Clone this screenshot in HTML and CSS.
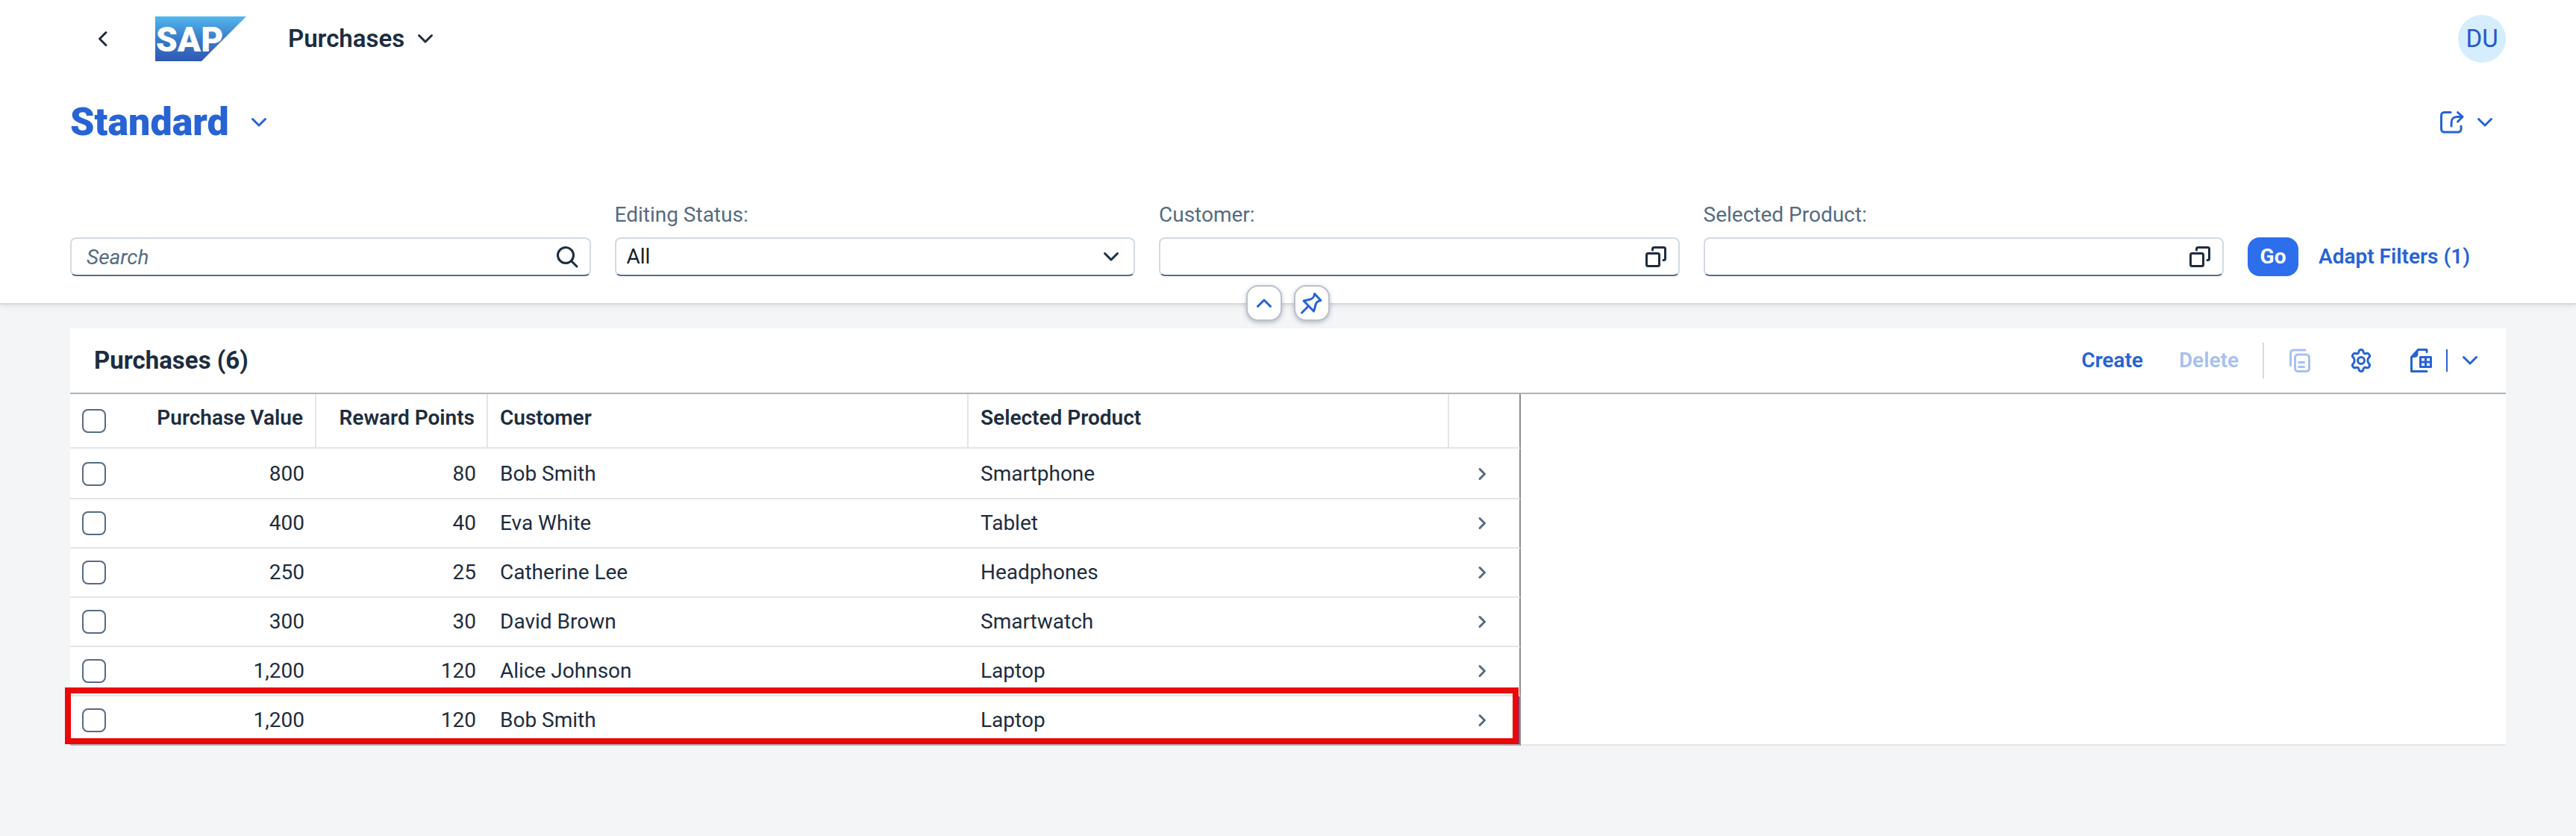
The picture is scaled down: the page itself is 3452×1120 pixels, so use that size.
FILE: index.html
```html
<!DOCTYPE html>
<html lang="en">
<head>
<meta charset="utf-8">
<meta name="viewport" content="width=device-width, initial-scale=1">
<title>Purchases</title>
<link rel="stylesheet" href="styles.css">
</head>
<body>
<svg class="sprite" aria-hidden="true">
  <symbol id="i-down" viewBox="0 0 32 32"><path d="M7.500 11.500 16 20l8.500-8.500"/></symbol>
  <symbol id="i-up" viewBox="0 0 32 32"><path d="M7.500 20.500 16 12l8.500 8.500"/></symbol>
  <symbol id="i-left" viewBox="0 0 32 32"><path d="M20 7.500 11.500 16l8.500 8.500"/></symbol>
  <symbol id="i-nav" viewBox="0 0 24 24"><path d="M9 5.500 15.500 12 9 18.500"/></symbol>
  <symbol id="i-search" viewBox="0 0 32 32"><circle cx="14" cy="14" r="10.500"/><path d="M22 22l7 7"/></symbol>
  <symbol id="i-help" viewBox="0 0 32 32"><rect x="3.500" y="11.500" width="17" height="17" rx="2"/><path d="M11.500 7V5.500a2 2 0 0 1 2-2h13a2 2 0 0 1 2 2v13a2 2 0 0 1-2 2H26"/></symbol>
  <symbol id="i-share" viewBox="0 0 32 32"><path d="M14 2.500H5.500a4 4 0 0 0-4 4V25a4 4 0 0 0 4 4H24a4 4 0 0 0 4-4v-4M15 21v-5c0-4.500 3-7.500 7.500-7.500H29M23.500 2.500l6.500 6-6.500 6.500"/></symbol>
  <symbol id="i-pin" viewBox="0 0 32 32"><path d="M19.500 3.500 28 12.500c-4 .5-7 3.500-7.500 8l-2 6.500L5 13l7-1.500c4-.5 7.500-3.500 7.500-8zM11.500 20 2.500 29"/></symbol>
  <symbol id="i-copy" viewBox="0 0 32 32"><path d="M3.500 22.500V6a4 4 0 0 1 4-4H23M14.500 18.500h7M14.500 24.500h7"/><rect x="9.500" y="8" width="19" height="22.500" rx="4"/></symbol>
  <symbol id="i-gear" viewBox="0 0 32 32"><path d="M16 1.500c1.800 0 2.700 1 3 2.700.4 2.200 1.600 3 3.800 2.300 1.700-.6 3.200-.4 4.200 1.400 1 1.700.6 3.200-.7 4.300-1.900 1.700-1.900 5.900 0 7.600 1.300 1.100 1.700 2.600.7 4.300-1 1.800-2.500 2-4.200 1.400-2.200-.7-3.400.1-3.800 2.300-.3 1.700-1.200 2.700-3 2.700s-2.700-1-3-2.700c-.4-2.200-1.600-3-3.800-2.300-1.700.6-3.200.4-4.200-1.400-1-1.700-.6-3.200.7-4.300 1.900-1.700 1.900-5.900 0-7.600C4.400 11.100 4 9.600 5 7.900c1-1.800 2.500-2 4.200-1.400 2.200.7 3.400-.1 3.800-2.300.3-1.700 1.200-2.700 3-2.700z"/><circle cx="16" cy="16" r="4.500"/></symbol>
  <symbol id="i-export" viewBox="0 0 32 32"><path d="M24 4.500V1.500H12.500l-9 10v19H24"/><path class="solid" d="M12 2v5.500c0 2.500-1.500 4-4 4H3z"/><path d="M15.500 11.500h14v13h-14zM22.500 11.500v13M15.500 18h14"/></symbol>
</svg>

<header class="top">
  <div class="shell">
    <button class="icon-btn back" aria-label="Back"><svg class="ic"><use href="#i-left"/></svg></button>
    <a class="logo" href="#" aria-label="Home">
      <svg viewBox="0 0 122 60" width="122" height="60">
        <defs><linearGradient id="lg" x1="0" y1="0" x2="0" y2="1"><stop offset="0" stop-color="#52b7ee"/><stop offset=".5" stop-color="#3a7cc9"/><stop offset="1" stop-color="#2f59b3"/></linearGradient></defs>
        <path d="M0 0h122L62 60H0z" fill="url(#lg)"/>
        <text x="1" y="47" class="logo-text">SAP</text>
      </svg>
    </a>
    <button class="app-title">Purchases <svg class="ic"><use href="#i-down"/></svg></button>
    <button class="avatar" aria-label="User DU">DU</button>
  </div>
  <div class="view-row">
    <h1>Standard</h1>
    <button class="icon-btn" aria-label="Select view"><svg class="ic"><use href="#i-down"/></svg></button>
    <button class="icon-btn share" aria-label="Share"><svg class="ic"><use href="#i-share"/></svg><svg class="ic"><use href="#i-down"/></svg></button>
  </div>
  <form class="filters">
    <div class="field">
      <div class="control"><input class="search" type="text" placeholder="Search" aria-label="Search"><svg class="ic"><use href="#i-search"/></svg></div>
    </div>
    <div class="field">
      <label for="status">Editing Status:</label>
      <div class="control"><select id="status"><option>All</option></select><svg class="ic"><use href="#i-down"/></svg></div>
    </div>
    <div class="field">
      <label for="customer">Customer:</label>
      <div class="control"><input id="customer" type="text"><svg class="ic"><use href="#i-help"/></svg></div>
    </div>
    <div class="field">
      <label for="product">Selected Product:</label>
      <div class="control"><input id="product" type="text"><svg class="ic"><use href="#i-help"/></svg></div>
    </div>
    <div class="actions">
      <button type="button" class="go">Go</button>
      <button type="button" class="text-btn">Adapt Filters (1)</button>
    </div>
  </form>
  <div class="toggles">
    <button aria-label="Collapse header"><svg class="ic"><use href="#i-up"/></svg></button>
    <button aria-label="Pin header"><svg class="ic"><use href="#i-pin"/></svg></button>
  </div>
</header>

<main class="panel">
  <div class="toolbar">
    <h2>Purchases (6)</h2>
    <button class="text-btn">Create</button>
    <button class="text-btn" disabled>Delete</button>
    <span class="sep"></span>
    <button class="icon-btn" disabled aria-label="Copy"><svg class="ic"><use href="#i-copy"/></svg></button>
    <button class="icon-btn" aria-label="Settings"><svg class="ic"><use href="#i-gear"/></svg></button>
    <button class="icon-btn" aria-label="Export"><svg class="ic"><use href="#i-export"/></svg></button>
    <span class="split"></span>
    <button class="icon-btn" aria-label="Export options"><svg class="ic"><use href="#i-down"/></svg></button>
  </div>
  <div class="grid">
    <div class="table-wrap">
      <table>
        <colgroup><col class="c-sel"><col class="c-value"><col class="c-points"><col><col><col class="c-nav"></colgroup>
        <thead>
          <tr><th><input type="checkbox" aria-label="Select all"></th><th class="num">Purchase Value</th><th class="num">Reward Points</th><th>Customer</th><th>Selected Product</th><th class="nav"></th></tr>
        </thead>
        <tbody>
          <tr><td><input type="checkbox" aria-label="Select row 1"></td><td class="num">800</td><td class="num">80</td><td>Bob Smith</td><td>Smartphone</td><td class="nav"><svg class="ic"><use href="#i-nav"/></svg></td></tr>
          <tr><td><input type="checkbox" aria-label="Select row 2"></td><td class="num">400</td><td class="num">40</td><td>Eva White</td><td>Tablet</td><td class="nav"><svg class="ic"><use href="#i-nav"/></svg></td></tr>
          <tr><td><input type="checkbox" aria-label="Select row 3"></td><td class="num">250</td><td class="num">25</td><td>Catherine Lee</td><td>Headphones</td><td class="nav"><svg class="ic"><use href="#i-nav"/></svg></td></tr>
          <tr><td><input type="checkbox" aria-label="Select row 4"></td><td class="num">300</td><td class="num">30</td><td>David Brown</td><td>Smartwatch</td><td class="nav"><svg class="ic"><use href="#i-nav"/></svg></td></tr>
          <tr><td><input type="checkbox" aria-label="Select row 5"></td><td class="num">1,200</td><td class="num">120</td><td>Alice Johnson</td><td>Laptop</td><td class="nav"><svg class="ic"><use href="#i-nav"/></svg></td></tr>
          <tr><td><input type="checkbox" aria-label="Select row 6"></td><td class="num">1,200</td><td class="num">120</td><td>Bob Smith</td><td>Laptop</td><td class="nav current"><svg class="ic"><use href="#i-nav"/></svg></td></tr>
        </tbody>
      </table>
      <div class="highlight"></div>
    </div>
    <div class="blank"></div>
  </div>
</main>
</body>
</html>
```
FILE: styles.css
```css
* { box-sizing: border-box; }
body {
  margin: 0;
  background: #f4f5f7;
  color: #1d2d3e;
  font-family: Roboto, "Liberation Sans", sans-serif;
  font-size: 28px;
  line-height: 36px;
}
button, input, select { font: inherit; color: inherit; }
button { background: none; border: 0; padding: 0; }
h1, h2 { margin: 0; }
.sprite { position: absolute; width: 0; height: 0; }
.ic {
  display: block;
  flex: none;
  width: 32px;
  height: 32px;
  fill: none;
  stroke: currentColor;
  stroke-width: 3;
  stroke-linecap: round;
  stroke-linejoin: round;
}
.solid { fill: currentColor; stroke-width: 1; }

.top {
  position: relative;
  background: #fff;
  border-bottom: 2px solid #d9d9d9;
  box-shadow: 0 2px 6px rgba(34, 53, 72, .1);
  padding-bottom: 36px;
}
.shell {
  display: flex;
  align-items: center;
  height: 104px;
  padding: 0 94px 0 122px;
}
.back { margin-right: 54px; }
.logo, .logo svg { display: block; }
.logo-text { font: 900 46px Roboto, sans-serif; fill: #fff; }
.app-title {
  display: flex;
  align-items: center;
  gap: 12px;
  margin-left: 56px;
  font-size: 33px;
  font-weight: 600;
}
.avatar {
  width: 64px;
  height: 64px;
  margin-left: auto;
  border-radius: 50%;
  background: #d5edfc;
  color: #2557cf;
  font-size: 33px;
}
.view-row {
  display: flex;
  align-items: center;
  height: 120px;
  padding: 0 106px 0 94px;
  color: #2763d4;
}
.view-row h1 {
  margin-right: 24px;
  font-size: 52px;
  line-height: 56px;
  font-weight: 900;
}
.share { display: flex; gap: 12px; margin-left: auto; }
.filters {
  display: grid;
  grid-template-columns: repeat(4, 1fr) auto;
  column-gap: 32px;
  align-items: end;
  padding: 46px 94px 0;
}
.field label { display: block; margin-bottom: 12px; color: #556b82; }
.control { display: grid; align-items: center; }
.control > * { grid-area: 1 / 1; }
.control .ic { justify-self: end; margin-right: 16px; color: #1d2d3e; pointer-events: none; }
.control input, .control select {
  width: 100%;
  height: 52px;
  padding: 0 14px;
  border: 2px solid #d3dae1;
  border-bottom-color: #556b82;
  border-radius: 8px;
  background: #fff;
  color: #131e29;
  appearance: none;
}
.control .search { padding: 0 20px; }
.search::placeholder { color: #556b82; font-style: italic; opacity: 1; }
.actions { display: flex; gap: 27px; padding-right: 48px; }
.go {
  width: 68px;
  height: 52px;
  border-radius: 16px;
  background: #2c6eec;
  color: #fff;
  font-weight: 700;
}
.text-btn { color: #2763d4; font-weight: 600; }
:disabled { opacity: .4; }
.toggles {
  position: absolute;
  left: 0;
  right: 0;
  bottom: -24px;
  display: flex;
  justify-content: center;
  gap: 16px;
}
.toggles button {
  display: grid;
  place-items: center;
  width: 48px;
  height: 48px;
  border: 2px solid #bac0ca;
  border-radius: 16px;
  background: #fff;
  color: #2763d4;
  box-shadow: 0 2px 6px rgba(34, 53, 72, .3);
}

.panel { margin: 32px 94px 0; background: #fff; }
.toolbar {
  display: flex;
  align-items: center;
  height: 88px;
  padding: 0 32px;
  border-bottom: 2px solid #a8b3bd;
  color: #2763d4;
}
.toolbar h2 {
  margin-right: auto;
  color: #1d2d3e;
  font-size: 33px;
  font-weight: 700;
}
.toolbar .text-btn { margin-right: 48px; }
.toolbar .text-btn:disabled { margin-right: 32px; }
.sep { width: 2px; height: 48px; margin-right: 32px; background: #d9d9d9; }
.toolbar .icon-btn { margin-right: 48px; }
.toolbar .icon-btn:disabled { margin-right: 50px; }
.split { width: 2px; height: 30px; margin: 0 14px 0 -30px; background: #2763d4; }
.toolbar .icon-btn:last-child { margin-right: 0; }

.grid { display: flex; }
.table-wrap { position: relative; flex: 81 1 0; min-width: 0; }
.blank { flex: 55 1 0; border-bottom: 2px solid #e5e5e5; }
table { width: 100%; table-layout: fixed; border-spacing: 0; }
.c-sel { width: 64px; }
.c-value { width: 266px; }
.c-points { width: 230px; }
.c-nav { width: 96px; }
th, td { text-align: left; padding: 0 16px; border-bottom: 2px solid #e5e5e5; white-space: nowrap; }
th { height: 73px; padding-bottom: 8px; border-right: 2px solid #e5e5e5; font-weight: 600; }
th:first-child { padding-bottom: 0; border-right: 0; }
td { height: 66px; }
.num { text-align: right; }
tbody tr:first-child td { height: 68px; padding-top: 2px; }
tbody tr:last-child td { border-bottom-color: #a8b3bd; }
th.nav, td.nav { border-right: 2px solid #8c8c8c; }
td.nav { padding: 0 0 0 32px; color: #556b82; }
td.nav .ic { width: 24px; height: 24px; }
td.current { box-shadow: inset -2px 0 #3f55b5; }
input[type="checkbox"] {
  display: block;
  width: 32px;
  height: 32px;
  margin: 0;
  border: 2px solid #556b82;
  border-radius: 8px;
  background: #fff;
  appearance: none;
}
.highlight {
  position: absolute;
  left: -7px;
  right: 3px;
  bottom: 2px;
  height: 76px;
  border: 8px solid #ea0808;
  pointer-events: none;
}
```
